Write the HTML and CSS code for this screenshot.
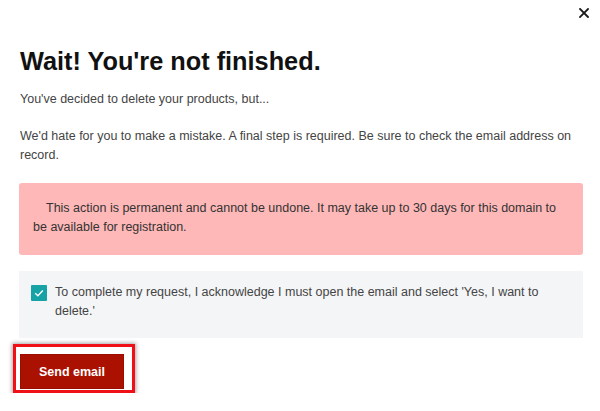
FILE: index.html
```html
<!DOCTYPE html>
<html>
<head>
<meta charset="utf-8">
<link rel="stylesheet" href="styles.css">
</head>
<body>
<div class="modal">
  <div class="modal-header">
    <button class="close" aria-label="Close">
      <svg width="10" height="10" viewBox="0 0 10 10"><path d="M1 1L9 9M9 1L1 9" stroke="#1a1a1a" stroke-width="1.8" stroke-linecap="square"/></svg>
    </button>
  </div>
  <h1 class="title">Wait! You're not finished.</h1>
  <p class="text first">You've decided to delete your products, but...</p>
  <p class="text second">We'd hate for you to make a mistake. A final step is required. Be sure to check the email address on record.</p>
  <div class="alert">This action is permanent and cannot be undone. It may take up to 30 days for this domain to be available for registration.</div>
  <label class="ack">
    <span class="checkbox">
      <svg width="16" height="16" viewBox="0 0 16 16"><path d="M4.2 8.3L6.9 10.8L11.8 5.6" fill="none" stroke="#fff" stroke-width="1.4"/></svg>
    </span>
    <span class="ack-text">To complete my request, I acknowledge I must open the email and select 'Yes, I want to delete.'</span>
  </label>
  <div class="highlight">
    <button class="send">Send email</button>
  </div>
</div>
</body>
</html>
```
FILE: styles.css
```css
html, body {
  margin: 0;
  padding: 0;
  background: #fff;
}
body {
  font-family: "Liberation Sans", Arial, sans-serif;
  color: #333;
}
.modal {
  padding: 0 17px 0 20px;
  display: flex;
  flex-direction: column;
}
.modal-header {
  display: flex;
  justify-content: flex-end;
  height: 46px;
  margin-right: -6px;
}
.close {
  border: 0;
  background: none;
  padding: 0;
  margin-top: 8px;
  width: 10px;
  height: 10px;
  display: flex;
}
.title {
  margin: 0;
  font-size: 25.3px;
  line-height: 30px;
  font-weight: bold;
  color: #111;
}
.text {
  margin: 0;
  font-size: 12.5px;
  line-height: 19px;
  color: #444;
}
.first {
  margin-top: 14px;
}
.second {
  margin-top: 18px;
}
.alert {
  margin-top: 18px;
  margin-left: -1px;
  background: #ffb8b8;
  border-radius: 3px;
  padding: 16px 20px 18px 14px;
  text-indent: 13px;
  font-size: 12.5px;
  line-height: 19px;
  color: #333;
}
.ack {
  margin-top: 16px;
  margin-left: -1px;
  background: #f4f5f7;
  display: flex;
  gap: 8px;
  padding: 12px 20px 17px 12px;
  font-size: 12.5px;
  line-height: 19px;
  color: #444;
}
.checkbox {
  flex: none;
  width: 16px;
  height: 16px;
  margin-top: 2px;
  background: #17a3a5;
  border-radius: 1px;
  display: flex;
}
.highlight {
  align-self: flex-start;
  margin-top: 6px;
  margin-left: -7px;
  border: 3px solid #f01018;
  padding: 7px 8px 1px 4px;
  box-shadow: 0 0 4px 1px rgba(0, 0, 0, 0.35);
}
.send {
  display: block;
  width: 104px;
  height: 35px;
  border: 1px solid #9a0e00;
  background: #ab1100;
  color: #fff;
  font-family: "Liberation Sans", Arial, sans-serif;
  font-weight: bold;
  font-size: 12.5px;
  padding: 0;
}
```
